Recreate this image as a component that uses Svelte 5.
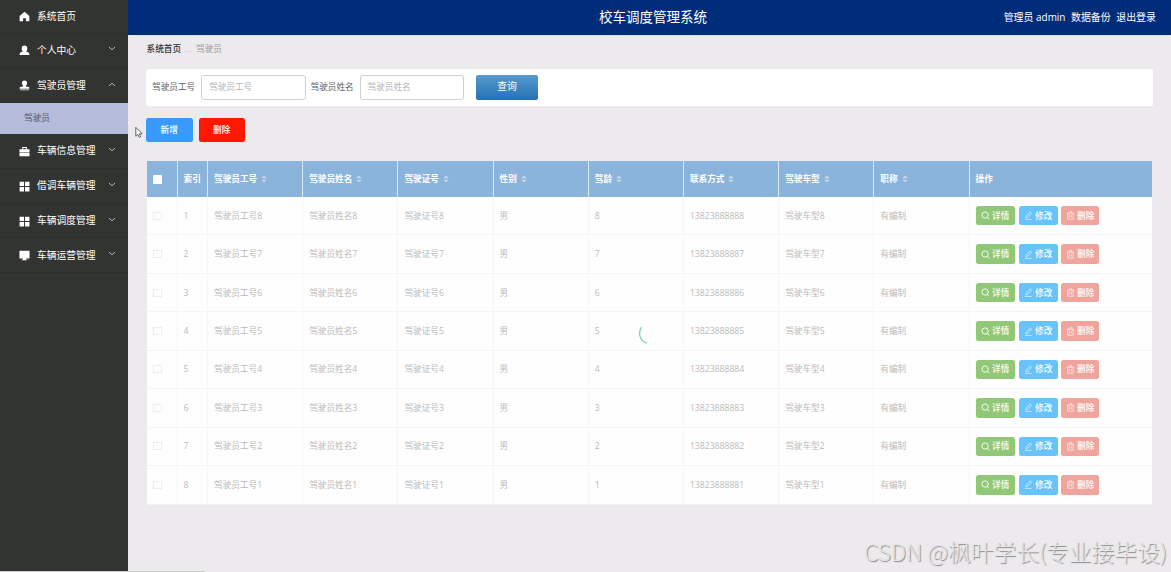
<script>
  const menu = [
    { label: '系统首页', icon: 'home', arrow: '' },
    { label: '个人中心', icon: 'user', arrow: 'down' },
    { label: '驾驶员管理', icon: 'stamp', arrow: 'up', child: '驾驶员' },
    { label: '车辆信息管理', icon: 'case', arrow: 'down' },
    { label: '借调车辆管理', icon: 'grid', arrow: 'down' },
    { label: '车辆调度管理', icon: 'grid', arrow: 'down' },
    { label: '车辆运营管理', icon: 'screen', arrow: 'down' }
  ];
  const icons = {
    home: 'M7 1 .8 6.500V13h4.400V9.200h3.600V13h4.400V6.500Z',
    user: 'M7 .6a3.500 3.500 0 0 0-3.500 3.500v1.200c0 1.500.8 2.500 1.800 3C2.500 8.600.6 9.600.6 12.800h12.800c0-3.200-1.900-4.200-4.700-4.500 1-.5 1.800-1.500 1.800-3V4.100A3.500 3.500 0 0 0 7 .6Z',
    stamp: 'M7 .6a3.300 3.300 0 0 0-3.300 3.300c0 2 1.600 2.700 1.400 4.600H2.500C1.200 8.500.6 9.400.6 11.200h12.800c0-1.800-.6-2.700-1.900-2.700H8.900c-.2-1.900 1.400-2.600 1.400-4.600A3.300 3.300 0 0 0 7 .6ZM1.400 12h11.200v1.200H1.400Z',
    case: 'M4 4V1.200h6V4h3.400v4.200H.6V4Zm1.300 0h3.400V2.500H5.300ZM.6 9h12.800v4.200H.6Z',
    grid: 'M.8.800h5.600v5.600H.8ZM7.700.800h5.600v5.600H7.700ZM.8 7.700h5.600v5.600H.8ZM7.700 7.700h5.600v5.600H7.700Z',
    screen: 'M.6 1h12.800v9.800H9V12h1.500v1.200h-7V12H5v-1.200H.6Z'
  };
  const columns = ['驾驶员工号', '驾驶员姓名', '驾驶证号', '性别', '驾龄', '联系方式', '驾驶车型', '职称'];
  const rows = [8, 7, 6, 5, 4, 3, 2, 1].map((n, i) => [
    i + 1, '驾驶员工号' + n, '驾驶员姓名' + n, '驾驶证号' + n, '男', n, '1382388888' + n, '驾驶车型' + n, '有编制'
  ]);
</script>

<div class="app">
  <aside>
    {#each menu as item}
      <div class="item">
        <svg class="mi" viewBox="0 0 14 14"><path fill-rule="evenodd" d={icons[item.icon]} /></svg>
        <span>{item.label}</span>
        {#if item.arrow}
          <svg class="arrow" class:up={item.arrow === 'up'} viewBox="0 0 8 5"><path d="M1 1l3 2.800L7 1" /></svg>
        {/if}
      </div>
      {#if item.child}<div class="child">{item.child}</div>{/if}
    {/each}
  </aside>

  <div class="main">
    <header>
      <h1>校车调度管理系统</h1>
      <nav><span>管理员 admin</span><span>数据备份</span><span>退出登录</span></nav>
    </header>
    <div class="crumb"><b>系统首页</b><i>...</i><span>驾驶员</span></div>

    <div class="search">
      <span class="lab">驾驶员工号</span><div class="input">驾驶员工号</div>
      <span class="lab second">驾驶员姓名</span><div class="input">驾驶员姓名</div>
      <div class="query">查询</div>
    </div>
    <div class="tools"><div class="btn add">新增</div><div class="btn del">删除</div></div>

    <div class="table">
      <div class="row head">
        <div class="cell"><span class="box"></span></div>
        <div class="cell">索引</div>
        {#each columns as c}
          <div class="cell">{c}<svg class="sort" viewBox="0 0 6 8"><path d="M3 .5 5.700 3.300H.3ZM3 7.500.3 4.700h5.400Z" /></svg></div>
        {/each}
        <div class="cell">操作</div>
      </div>
      {#each rows as r}
        <div class="row">
          <div class="cell"><span class="box"></span></div>
          {#each r as v}<div class="cell">{v}</div>{/each}
          <div class="cell acts">
            <div class="act view"><svg viewBox="0 0 10 10"><circle cx="4.500" cy="4.500" r="3.500" /><path d="M7 7l2.300 2.300" /></svg>详情</div>
            <div class="act edit"><svg viewBox="0 0 10 10"><path d="M2 7.500 2.500 5.500 7 1l1.500 1.500L4 7ZM1 9.300h7.500" /></svg>修改</div>
            <div class="act rm"><svg viewBox="0 0 10 10"><path d="M.8 2.500h8.400M3.500 2.300V.8h3v1.500M2 2.500v6.700h6V2.500M4 4.300v3M6 4.300v3" /></svg>删除</div>
          </div>
        </div>
      {/each}
      <svg class="spin" viewBox="0 0 12 20"><path d="M3.600 2.200C-.3 8 1.500 15.500 9 18.300" /></svg>
    </div>
  </div>

  <div class="hbar"></div>
  <svg class="cursor" viewBox="0 0 8 12"><path d="M.8.800v9l2.100-1.900 1.300 3 1.500-.7-1.300-2.900h2.800Z" /></svg>
  <div class="mark">CSDN @枫叶学长(专业接毕设)</div>
</div>

<style>
  :global(body) { margin: 0; overflow: hidden; }
  .app {
    position: relative; display: flex; width: 1171px; height: 572px; overflow: hidden;
    background: #eceaed; color: #666; font: 8.650px/12px "Open Sans", "Noto Sans CJK SC", sans-serif;
  }
  .app *, .app { box-sizing: border-box; }
  aside { width: 128px; flex: none; height: 570.500px; background: #323431; overflow: hidden; }
  .item {
    display: flex; align-items: center; height: 34.900px; padding: 1px 0 0 19px; color: #fff;
    font-size: 9.750px; border-bottom: 1px solid #2d2f2c;
  }
  .item:first-child { height: 33.500px; }
  .item span { flex: 1; margin-left: 7px; white-space: nowrap; }
  .mi { width: 11px; height: 11px; fill: #fff; }
  .arrow { width: 8px; height: 5px; margin: -4px 12px 0 0; fill: none; stroke: #bbb; stroke-width: 1; }
  .up { transform: rotate(180deg); margin-top: -2px; }
  .child { height: 30.500px; padding-left: 24px; line-height: 30.500px; background: #b4bbdb; color: #555967; font-size: 8.650px; }
  .main { flex: 1; min-width: 0; }
  header {
    position: relative; display: flex; align-items: center; justify-content: center; height: 35px;
    background: #002d7a; color: #fff; box-shadow: 0 3px 2px -2px #d8e6ee;
  }
  h1 { margin: -1px 0 0 7px; font-size: 13.500px; line-height: 20px; font-weight: 400; }
  nav { position: absolute; right: 15px; top: 11px; display: flex; gap: 5.500px; font-size: 9.950px; line-height: 13px; }
  .crumb { display: flex; height: 34px; padding: 8px 18.500px 0; }
  .crumb b { color: #303133; font-weight: 500; }
  .crumb i { width: 15px; padding-left: 4px; color: #c8c8cc; font-style: normal; }
  .crumb span { color: #999; }
  .search { display: flex; align-items: center; height: 36.500px; margin: 0 18px; padding-left: 6px; background: #fff; border-radius: 2px; }
  .lab { width: 49px; color: #606266; }
  .second { margin-left: 5px; }
  .input { width: 104.500px; height: 24.500px; padding: 5px 7px; border: 1px solid #cfcfd6; border-radius: 3px; color: #b4b4b8; }
  .query {
    width: 62px; height: 24.500px; margin-left: 12px; border-radius: 2px; text-align: center; line-height: 24px;
    font-size: 9.800px; color: #fff; background: linear-gradient(#579cd0, #2670b4);
  }
  .tools { display: flex; gap: 6px; padding: 12px 18px 0; }
  .btn { width: 46.500px; height: 24.500px; border-radius: 2.500px; text-align: center; line-height: 25px; color: #fff; font-weight: 500; }
  .add { background: #3a9afc; }
  .del { background: #ff1800; }
  .table { position: relative; width: 1005.500px; margin: 19px 0 0 18.500px; background: #fefefe; }
  .row { display: grid; grid-template-columns: 31px 30.500px repeat(8, 95.200px) 1fr; height: 38.450px; }
  .head { height: 36px; background: #8ab4dc; color: #fff; font-weight: 700; }
  .cell {
    display: flex; align-items: center; padding-left: 6px; color: #bbb;
    border-right: 1px solid #f6f6f6; border-bottom: 1px solid #f4f4f5; white-space: nowrap;
  }
  .head .cell { color: #fff; border-right-color: #d7eaf5; border-bottom: 0; }
  .cell:last-child { border-right: 0; }
  .box { width: 9px; height: 8px; border: 1px solid #eee; background: #fff; }
  .head .box { width: 9px; height: 9px; border: 0; border-radius: 1px; }
  .sort { width: 6px; height: 8px; margin-left: 4px; fill: #c8d8e6; }
  .acts { gap: 4px; }
  .act { display: flex; align-items: center; justify-content: center; gap: 2.500px; width: 39px; height: 19.500px; border-radius: 2.500px; color: #fff; font-weight: 500; }
  .act svg { width: 9px; height: 9px; fill: none; stroke: #fff; stroke-width: 1; }
  .view { background: #90c878; }
  .edit { background: #68c2fc; }
  .rm { width: 38px; margin-left: -.5px; background: #efa59d; }
  .act.edit svg, .act.rm svg { opacity: .7; }
  .spin { position: absolute; left: 491px; top: 164px; width: 12px; height: 20px; fill: none; stroke: #7bcbae; stroke-width: 1.200; }
  .hbar { position: absolute; left: 0; bottom: 0; width: 205px; height: 1.500px; background: #c9cac9; }
  .cursor { position: absolute; left: 135px; top: 126px; width: 8px; height: 13px; fill: #fff; stroke: #555; stroke-width: .9; }
  .mark {
    position: absolute; right: 4px; bottom: 6px; font-size: 22.750px; line-height: 28px; white-space: nowrap;
    font-family: "Noto Sans CJK SC", sans-serif; font-weight: 300; color: #e6e5e7; text-shadow: 1px 1px 1px #888;
  }
</style>
